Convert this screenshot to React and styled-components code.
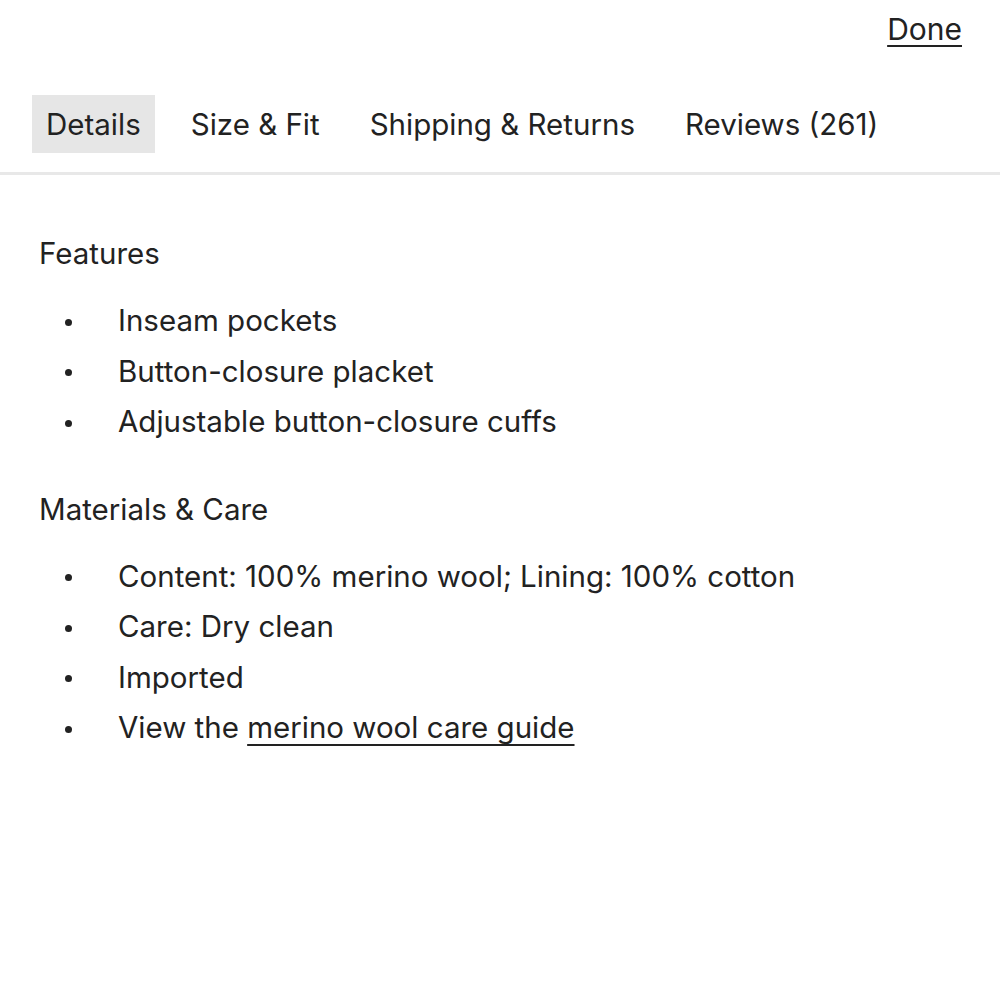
import React from "react";
import styled, { createGlobalStyle } from "styled-components";

const GlobalStyle = createGlobalStyle`
  body {
    margin: 0;
    background: #ffffff;
    font-family: "Inter", "Open Sans", sans-serif;
    color: #222222;
  }
`;

const Page = styled.div`
  width: 1000px;
  height: 1000px;
  display: flex;
  flex-direction: column;
`;

const TopBar = styled.div`
  display: flex;
  justify-content: flex-end;
  padding: 10px 38px 0 0;
  height: 95px;
  box-sizing: border-box;
`;

const DoneLink = styled.a`
  font-size: 30px;
  line-height: 38px;
  color: #222222;
  text-decoration: underline;
  text-underline-offset: 5px;
  text-decoration-thickness: 2px;
  cursor: pointer;
`;

const Tabs = styled.div`
  display: flex;
  align-items: stretch;
  gap: 22px;
  padding: 0 0 19px 32px;
  border-bottom: 3px solid #e8e8e8;
`;

const Tab = styled.button`
  border: none;
  margin: 0;
  font-family: inherit;
  font-size: 29.5px;
  color: #222222;
  height: 58px;
  padding: 0 14px;
  background: ${({ $active }) => ($active ? "#e6e6e6" : "transparent")};
  cursor: pointer;
`;

const Content = styled.div`
  padding: 56px 39px 0;
  display: flex;
  flex-direction: column;
  gap: 40px;
`;

const Section = styled.section`
  display: flex;
  flex-direction: column;
`;

const SectionTitle = styled.h3`
  margin: 0 0 20px;
  font-size: 29.5px;
  font-weight: 400;
  line-height: 44px;
`;

const List = styled.ul`
  margin: 0;
  padding: 0;
  list-style: none;
`;

const Item = styled.li`
  display: flex;
  align-items: center;
  font-size: 29.5px;
  line-height: 50.5px;
  &::before {
    content: "";
    width: 7px;
    height: 7px;
    border-radius: 50%;
    background: #222222;
    margin: 4px 46px 0 26px;
    flex: none;
  }
`;

const TextLink = styled.a`
  color: #222222;
  text-decoration: underline;
  text-underline-offset: 6px;
  text-decoration-thickness: 2px;
  margin-left: 0.28em;
`;

const tabs = ["Details", "Size & Fit", "Shipping & Returns", "Reviews (261)"];

const features = [
  "Inseam pockets",
  "Button-closure placket",
  "Adjustable button-closure cuffs",
];

const care = [
  "Content: 100% merino wool; Lining: 100% cotton",
  "Care: Dry clean",
  "Imported",
];

export default function App() {
  return (
    <Page>
      <GlobalStyle />
      <TopBar>
        <DoneLink>Done</DoneLink>
      </TopBar>
      <Tabs>
        {tabs.map((t, i) => (
          <Tab key={t} $active={i === 0}>
            {t}
          </Tab>
        ))}
      </Tabs>
      <Content>
        <Section>
          <SectionTitle>Features</SectionTitle>
          <List>
            {features.map((f) => (
              <Item key={f}>{f}</Item>
            ))}
          </List>
        </Section>
        <Section>
          <SectionTitle>Materials &amp; Care</SectionTitle>
          <List>
            {care.map((c) => (
              <Item key={c}>{c}</Item>
            ))}
            <Item>
              View the<TextLink>merino wool care guide</TextLink>
            </Item>
          </List>
        </Section>
      </Content>
    </Page>
  );
}
